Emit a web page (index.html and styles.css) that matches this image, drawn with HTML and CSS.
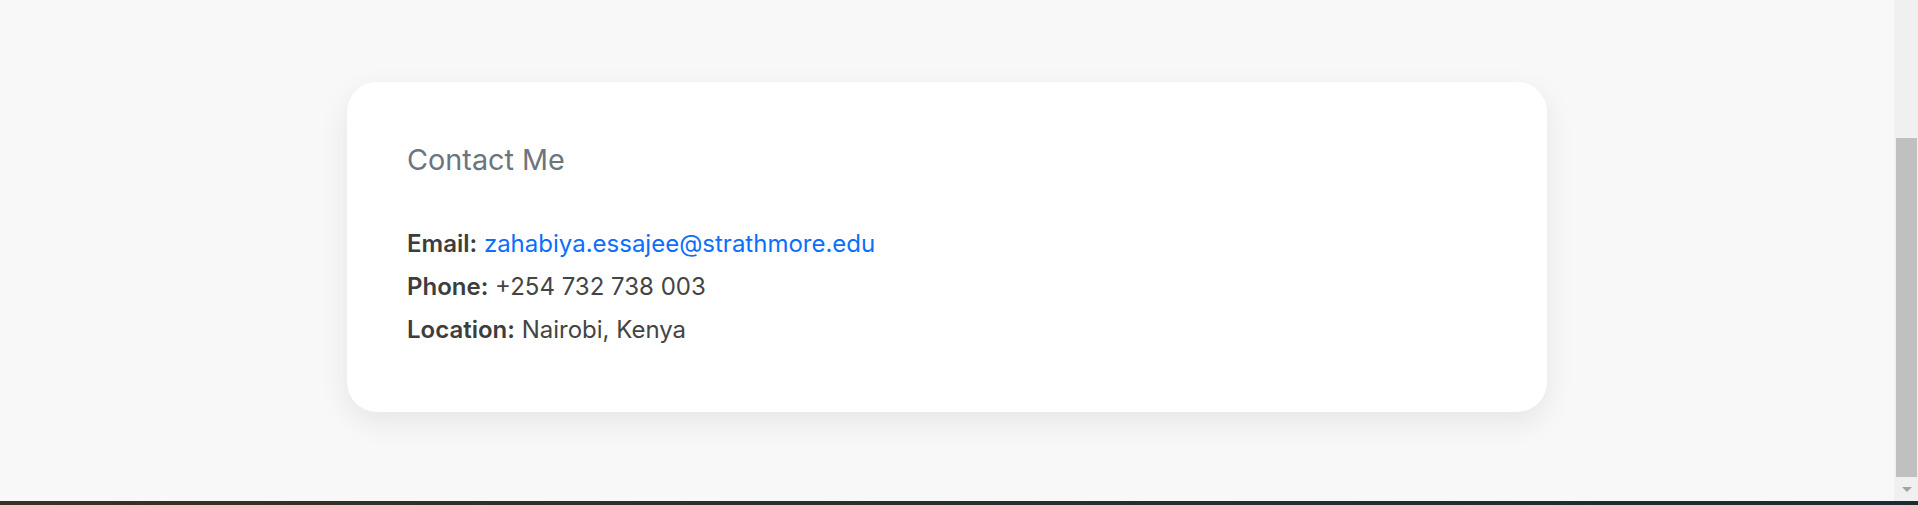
FILE: index.html
```html
<!DOCTYPE html>
<html lang="en">
<head>
<meta charset="utf-8">
<title>Contact Me</title>
<link rel="stylesheet" href="styles.css">
</head>
<body>
<div class="window">
  <div class="viewport">
    <main class="main">
      <section class="card">
        <h3 class="card-title">Contact Me</h3>
        <p class="row"><strong>Email:</strong> <a href="#" class="link">zahabiya.essajee@strathmore.edu</a></p>
        <p class="row"><strong>Phone:</strong> +254 732 738 003</p>
        <p class="row"><strong>Location:</strong> Nairobi, Kenya</p>
      </section>
    </main>
    <div class="scrollbar">
      <div class="thumb"></div>
      <div class="arrow-box"><span class="arrow"></span></div>
    </div>
  </div>
  <div class="taskbar"></div>
</div>
</body>
</html>
```
FILE: styles.css
```css
* { box-sizing: border-box; }
html, body { margin: 0; padding: 0; }
body {
  font-family: Inter, "Noto Sans", "Liberation Sans", sans-serif;
  background: #f8f8f8;
  overflow: hidden;
}
.window {
  width: 1918px;
  height: 505px;
  display: flex;
  flex-direction: column;
}
.viewport {
  flex: 1;
  display: flex;
  min-height: 0;
}
.main {
  flex: 1;
  display: flex;
  justify-content: center;
  align-items: flex-start;
  padding-top: 82px;
  background: #f8f8f8;
}
.card {
  width: 1200px;
  height: 330px;
  background: #fff;
  border-radius: 30px;
  padding: 60px;
  box-shadow: 0 10px 30px rgba(0, 0, 0, 0.08);
}
.card-title {
  margin: 1px 0 49px;
  font-size: 28.8px;
  line-height: 1.2;
  font-weight: 400;
  color: #6c757d;
}
.row {
  margin: 0 0 10px;
  font-size: 24px;
  line-height: 33px;
  color: #444;
}
.row strong {
  font-weight: 600;
  color: #3d3d3d;
}
.link {
  color: #0d6efd;
  text-decoration: none;
}
.scrollbar {
  width: 24px;
  background: #f0f0f0;
  display: flex;
  flex-direction: column;
  padding-top: 138px;
}
.thumb {
  height: 339px;
  margin: 0 1px 0 2px;
  background: #c0c0c0;
}
.arrow-box {
  flex: 1;
  display: flex;
  justify-content: center;
  align-items: center;
  padding-left: 2px;
}
.arrow {
  width: 0;
  height: 0;
  border-left: 5px solid transparent;
  border-right: 5px solid transparent;
  border-top: 5px solid #a3a3a3;
}
.taskbar {
  height: 4px;
  background: linear-gradient(90deg, #3a3026 0%, #2c2e2c 50%, #1d2b30 100%);
}
```
